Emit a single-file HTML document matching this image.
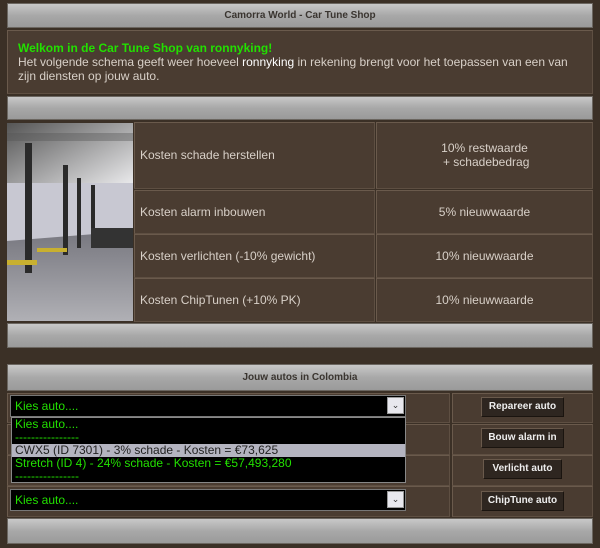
<!DOCTYPE html>
<html><head><meta charset="utf-8"><style>
*{margin:0;padding:0;box-sizing:border-box}
body{width:600px;height:548px;background:#3b3026;font-family:"Liberation Sans",Arial,sans-serif;font-size:11px;color:#d8d0c8;position:relative;overflow:hidden}
.abs{position:absolute}
.bar{background:linear-gradient(#c8c8c8,#a8a8a8 50%,#9a9a9a);border:1px solid #6b6660;color:#3a3530;font-weight:bold;font-size:10px;text-align:center}
.cell{background:#4a3c31;border:1px solid #5e4f42;border-top-color:#6a5a4c;border-left-color:#6a5a4c}
.sel{background:#000;color:#22e000;font-size:12px;border:1px solid #777}
.arr{position:absolute;right:1px;top:1px;width:17px;height:17px;background:#e8e8ee;border:1px solid #999;font-size:9px;color:#333;text-align:center;line-height:15px}
.btn{position:absolute;background:#2e2620;border:1px solid #6a5a4c;border-right-color:#1a140f;border-bottom-color:#1a140f;color:#eee;font-weight:bold;font-size:10px;text-align:center;line-height:18px}
</style></head><body>
<div class="abs bar" style="left:7px;top:3px;width:586px;height:25px;line-height:24px">Camorra World - Car Tune Shop</div>
<div class="abs cell" style="left:7px;top:30px;width:586px;height:64px;padding:10px 24px 10px 10px;font-size:12px;line-height:14px">
<div style="color:#22e000;font-weight:bold">Welkom in de Car Tune Shop van ronnyking!</div>
Het volgende schema geeft weer hoeveel <span style="color:#fff">ronnyking</span> in rekening brengt voor het toepassen van een van zijn diensten op jouw auto.</div>
<div class="abs bar" style="left:7px;top:96px;width:586px;height:24px"></div>

<svg class="abs" style="left:7px;top:123px" width="126" height="198">
<defs><linearGradient id="f" x1="0" y1="0" x2="0" y2="1"><stop offset="0" stop-color="#77777f"/><stop offset="1" stop-color="#b0b0b5"/></linearGradient>
<linearGradient id="c" x1="0" y1="0" x2="1" y2="1"><stop offset="0" stop-color="#555"/><stop offset="1" stop-color="#f4f4f6"/></linearGradient></defs>
<rect width="126" height="198" fill="#bdbdc5"/>
<rect width="126" height="70" fill="url(#c)"/>
<rect y="60" width="126" height="60" fill="#c8c8d2"/>
<polygon points="0,118 126,108 126,198 0,198" fill="url(#f)"/>
<rect x="0" y="10" width="126" height="8" fill="#555" opacity=".4"/>
<rect x="18" y="20" width="7" height="130" fill="#2a2a2a"/>
<rect x="56" y="42" width="5" height="90" fill="#2a2a2a"/>
<rect x="70" y="55" width="4" height="70" fill="#2a2a2a"/>
<rect x="84" y="62" width="4" height="55" fill="#2a2a2a"/>
<rect x="84" y="105" width="42" height="20" fill="#333"/>
<rect x="0" y="137" width="30" height="5" fill="#c8b030"/>
<rect x="30" y="125" width="30" height="4" fill="#c8b030"/>
</svg>

<div class="abs cell" style="left:134px;top:122px;width:241px;height:67px;padding:0 5px;line-height:65px;font-size:12px">Kosten schade herstellen</div>
<div class="abs cell" style="left:376px;top:122px;width:217px;height:67px;text-align:center;padding-top:18px;line-height:14px;font-size:12px">10% restwaarde<br>&nbsp;+ schadebedrag</div>
<div class="abs cell" style="left:134px;top:190px;width:241px;height:44px;padding:0 5px;line-height:42px;font-size:12px">Kosten alarm inbouwen</div>
<div class="abs cell" style="left:376px;top:190px;width:217px;height:44px;text-align:center;line-height:42px;font-size:12px">5% nieuwwaarde</div>
<div class="abs cell" style="left:134px;top:234px;width:241px;height:44px;padding:0 5px;line-height:42px;font-size:12px">Kosten verlichten (-10% gewicht)</div>
<div class="abs cell" style="left:376px;top:234px;width:217px;height:44px;text-align:center;line-height:42px;font-size:12px">10% nieuwwaarde</div>
<div class="abs cell" style="left:134px;top:278px;width:241px;height:44px;padding:0 5px;line-height:42px;font-size:12px">Kosten ChipTunen (+10% PK)</div>
<div class="abs cell" style="left:376px;top:278px;width:217px;height:44px;text-align:center;line-height:42px;font-size:12px">10% nieuwwaarde</div>
<div class="abs bar" style="left:7px;top:323px;width:586px;height:25px"></div>

<div class="abs bar" style="left:7px;top:364px;width:586px;height:27px;line-height:26px">Jouw autos in Colombia</div>
<div class="abs cell" style="left:7px;top:393px;width:443px;height:30px"></div>
<div class="abs cell" style="left:452px;top:393px;width:141px;height:30px"></div>
<div class="abs cell" style="left:7px;top:424px;width:443px;height:31px"></div>
<div class="abs cell" style="left:452px;top:424px;width:141px;height:31px"></div>
<div class="abs cell" style="left:7px;top:455px;width:443px;height:31px"></div>
<div class="abs cell" style="left:452px;top:455px;width:141px;height:31px"></div>
<div class="abs cell" style="left:7px;top:486px;width:443px;height:31px"></div>
<div class="abs cell" style="left:452px;top:486px;width:141px;height:31px"></div>

<div class="abs sel" style="left:10px;top:395px;width:396px;height:22px;padding:2px 4px;line-height:16px">Kies auto....<div class="arr">&#8964;</div></div>
<div class="abs" style="left:11px;top:417px;width:395px;height:66px;background:#000;border:1px solid #888;font-size:12px;line-height:13px;color:#22e000">
<div style="padding:0 3px">Kies auto....</div>
<div style="padding:0 3px">----------------</div>
<div style="padding:0 3px;background:#b4b4c0;color:#222">CWX5 (ID 7301) - 3% schade - Kosten = €73,625</div>
<div style="padding:0 3px">Stretch (ID 4) - 24% schade - Kosten = €57,493,280</div>
<div style="padding:0 3px">----------------</div>
</div>
<div class="abs sel" style="left:10px;top:489px;width:396px;height:22px;padding:2px 4px;line-height:16px">Kies auto....<div class="arr">&#8964;</div></div>

<div class="btn" style="left:481px;top:397px;width:83px;height:20px">Repareer auto</div>
<div class="btn" style="left:481px;top:428px;width:83px;height:20px">Bouw alarm in</div>
<div class="btn" style="left:483px;top:459px;width:79px;height:20px">Verlicht auto</div>
<div class="btn" style="left:481px;top:491px;width:83px;height:20px">ChipTune auto</div>
<div class="abs bar" style="left:7px;top:518px;width:586px;height:26px"></div>
</body></html>
